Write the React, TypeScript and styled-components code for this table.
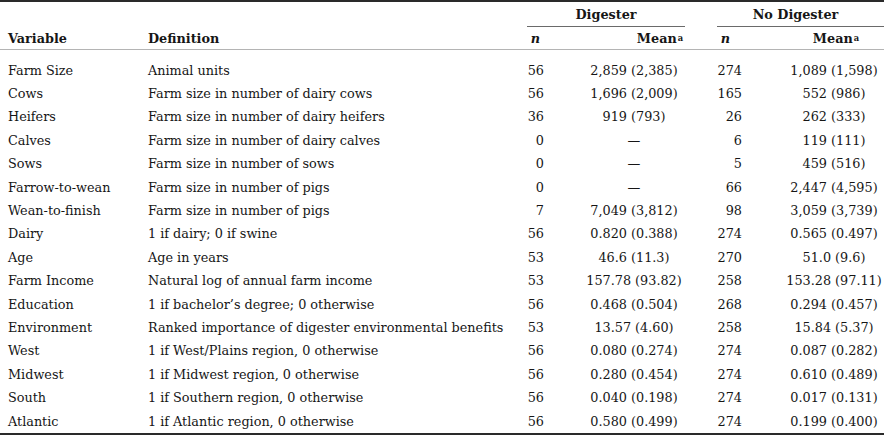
import React from "react";
import styled, { createGlobalStyle } from "styled-components";

const Global = createGlobalStyle`
  html, body { margin: 0; padding: 0; background: #ffffff; }
  body { font-family: "DejaVu Serif", "Liberation Serif", serif; color: #161616; }
`;

const COLS = "148px 379px 25px 164px 34px 134px";

const Table = styled.div`
  width: 884px;
  border-top: 2px solid #2a2a2a;
  border-bottom: 2px solid #2a2a2a;
  font-size: 12.8px;
`;

const Head = styled.div`
  display: grid;
  grid-template-columns: ${COLS};
  grid-template-rows: 25px 22px;
  border-bottom: 1px solid #b4b4b4;
  font-weight: bold;
`;

const Group = styled.div<{ $col: string; $ml?: number; $mr?: number; $pr?: number }>`
  grid-column: ${(p) => p.$col};
  grid-row: 1;
  display: flex;
  align-items: center;
  justify-content: center;
  margin-left: ${(p) => p.$ml ?? 0}px;
  margin-right: ${(p) => p.$mr ?? 0}px;
  padding-right: ${(p) => p.$pr ?? 0}px;
  border-bottom: 1px solid #6a6a6a;
`;

const HeadCell = styled.div<{ $col: number; $align?: string; $pl?: number; $pr?: number }>`
  grid-column: ${(p) => p.$col};
  grid-row: 2;
  display: flex;
  align-items: center;
  justify-content: ${(p) => p.$align ?? "flex-start"};
  padding-left: ${(p) => p.$pl ?? 0}px;
  padding-right: ${(p) => p.$pr ?? 0}px;
`;

const ItalicN = styled.span`
  font-style: italic;
`;

const Sup = styled.sup`
  font-size: 0.65em;
  line-height: 0;
  vertical-align: 0.5em;
  margin-left: 1px;
`;

const Body = styled.div`
  padding-top: 8.5px;
`;

const Row = styled.div`
  display: grid;
  grid-template-columns: ${COLS};
  height: 23.4px;
  align-items: center;
  white-space: nowrap;
`;

const Cell = styled.div<{ $align?: string; $pl?: number; $pr?: number }>`
  text-align: ${(p) => p.$align ?? "left"};
  padding-left: ${(p) => p.$pl ?? 0}px;
  padding-right: ${(p) => p.$pr ?? 0}px;
`;

type R = [string, string, string, string, string, string];

const rows: R[] = [
  ["Farm Size", "Animal units", "56", "2,859 (2,385)", "274", "1,089 (1,598)"],
  ["Cows", "Farm size in number of dairy cows", "56", "1,696 (2,009)", "165", "552 (986)"],
  ["Heifers", "Farm size in number of dairy heifers", "36", "919 (793)", "26", "262 (333)"],
  ["Calves", "Farm size in number of dairy calves", "0", "—", "6", "119 (111)"],
  ["Sows", "Farm size in number of sows", "0", "—", "5", "459 (516)"],
  ["Farrow-to-wean", "Farm size in number of pigs", "0", "—", "66", "2,447 (4,595)"],
  ["Wean-to-finish", "Farm size in number of pigs", "7", "7,049 (3,812)", "98", "3,059 (3,739)"],
  ["Dairy", "1 if dairy; 0 if swine", "56", "0.820 (0.388)", "274", "0.565 (0.497)"],
  ["Age", "Age in years", "53", "46.6 (11.3)", "270", "51.0 (9.6)"],
  ["Farm Income", "Natural log of annual farm income", "53", "157.78 (93.82)", "258", "153.28 (97.11)"],
  ["Education", "1 if bachelor’s degree; 0 otherwise", "56", "0.468 (0.504)", "268", "0.294 (0.457)"],
  ["Environment", "Ranked importance of digester environmental benefits", "53", "13.57 (4.60)", "258", "15.84 (5.37)"],
  ["West", "1 if West/Plains region, 0 otherwise", "56", "0.080 (0.274)", "274", "0.087 (0.282)"],
  ["Midwest", "1 if Midwest region, 0 otherwise", "56", "0.280 (0.454)", "274", "0.610 (0.489)"],
  ["South", "1 if Southern region, 0 otherwise", "56", "0.040 (0.198)", "274", "0.017 (0.131)"],
  ["Atlantic", "1 if Atlantic region, 0 otherwise", "56", "0.580 (0.499)", "274", "0.199 (0.400)"],
];

export default function App() {
  return (
    <>
      <Global />
      <Table>
        <Head>
          <Group $col="3 / 5" $mr={31}>Digester</Group>
          <Group $col="5 / 7" $ml={1} $pr={10}>No Digester</Group>
          <HeadCell $col={1} $pl={8}>Variable</HeadCell>
          <HeadCell $col={2}>Definition</HeadCell>
          <HeadCell $col={3} $align="flex-end" $pr={12}><ItalicN>n</ItalicN></HeadCell>
          <HeadCell $col={4} $align="center" $pl={52}>Mean<Sup>a</Sup></HeadCell>
          <HeadCell $col={5} $align="flex-end" $pr={20}><ItalicN>n</ItalicN></HeadCell>
          <HeadCell $col={6} $align="center" $pl={38}>Mean<Sup>a</Sup></HeadCell>
        </Head>
        <Body>
          {rows.map((r) => (
            <Row key={r[0]}>
              <Cell $pl={8}>{r[0]}</Cell>
              <Cell>{r[1]}</Cell>
              <Cell $align="right" $pr={8}>{r[2]}</Cell>
              <Cell $align="center">{r[3]}</Cell>
              <Cell $align="right" $pr={8}>{r[4]}</Cell>
              <Cell $align="center" $pl={34}>{r[5]}</Cell>
            </Row>
          ))}
        </Body>
      </Table>
    </>
  );
}
